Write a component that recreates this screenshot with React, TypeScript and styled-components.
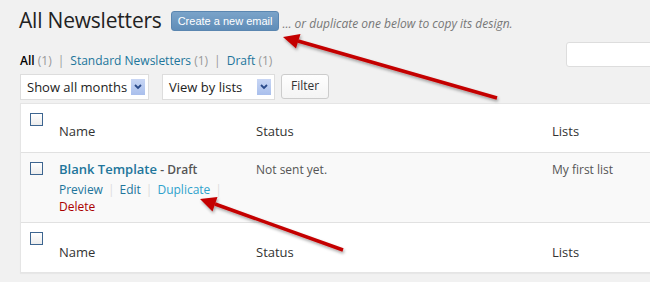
import React from 'react';
import styled, { createGlobalStyle } from 'styled-components';

const GlobalStyle = createGlobalStyle`
  html, body {
    margin: 0;
    padding: 0;
    background: #f1f1f1;
    overflow: hidden;
  }
  body {
    font-family: 'Open Sans', 'Liberation Sans', sans-serif;
    color: #333;
  }
`;

const StyledPage = styled.div`
  position: relative;
  width: 650px;
  height: 282px;
  padding-left: 20px;
  box-sizing: border-box;
`;

const StyledHeader = styled.div`
  align-items: center;
  display: flex;
  height: 28px;
  padding-top: 6px;
`;

const StyledTitle = styled.h1`
  color: #222;
  font-size: 21px;
  font-weight: 400;
  letter-spacing: -0.2px;
  line-height: 28px;
  margin: 0 9px 0 -1px;
`;

const StyledPrimaryButton = styled.span`
  background: linear-gradient(#7aa3c9, #5f8db8);
  border: 1px solid #5a86b0;
  border-radius: 3px;
  color: #fff;
  font-family: 'Liberation Sans', Arial, sans-serif;
  font-size: 11px;
  height: 18px;
  line-height: 18px;
  margin-top: 2px;
  padding: 0 6px;
`;

const StyledHint = styled.span`
  color: #777;
  font-size: 12px;
  font-style: italic;
  margin: 6px 0 0 3px;
`;

const StyledToolbar = styled.div`
  align-items: flex-start;
  display: flex;
  height: 40px;
  justify-content: space-between;
`;

const StyledSubsub = styled.ul`
  display: flex;
  font-size: 12px;
  gap: 6px;
  list-style: none;
  margin: 18px 0 0;
  padding: 0;
`;

const StyledFilterLink = styled.li<{ $current?: boolean }>`
  color: ${({ $current }) => ($current ? '#000' : '#21759b')};
  font-weight: ${({ $current }) => ($current ? 600 : 400)};
  white-space: pre;

  span {
    color: #999;
    font-weight: 400;
  }
`;

const StyledSep = styled.li`
  color: #999;
`;

const StyledSearch = styled.div`
  background: #fff;
  border: 1px solid #ddd;
  border-radius: 3px;
  height: 23px;
  margin-right: -18px;
  margin-top: 8px;
  width: 100px;
`;

const StyledFilters = styled.div`
  display: flex;
  gap: 13px;
  height: 29px;
`;

const StyledSelect = styled.div<{ $width: number }>`
  align-items: center;
  background: #fff;
  border: 1px solid #ddd;
  box-sizing: border-box;
  color: #222;
  display: flex;
  font-size: 13px;
  height: 26px;
  justify-content: space-between;
  padding: 0 3px 0 6px;
  width: ${({ $width }) => $width}px;
`;

const StyledSelectArrow = styled.span`
  align-items: center;
  background: linear-gradient(#c8d6f4, #a9bfec);
  display: flex;
  height: 16px;
  justify-content: center;
  width: 14px;
`;

const StyledButton = styled.span`
  background: linear-gradient(#fefefe, #f4f4f4);
  border: 1px solid #ccc;
  border-radius: 3px;
  box-sizing: border-box;
  color: #333;
  font-size: 12px;
  height: 25px;
  line-height: 22px;
  margin-left: -7px;
  padding: 0 9px;
`;

const StyledTable = styled.div`
  background: #fff;
  border: 1px solid #e5e5e5;
  box-shadow: 0 1px 1px rgba(0, 0, 0, 0.04);
  width: 660px;
`;

const StyledRow = styled.div<{ $alt?: boolean; $height: number }>`
  background: ${({ $alt }) => ($alt ? '#f9f9f9' : '#fff')};
  border-bottom: 1px solid #e1e1e1;
  box-sizing: border-box;
  display: grid;
  grid-template-columns: 28px 197px 296px 1fr;
  height: ${({ $height }) => $height}px;

  &:last-child {
    border-bottom: none;
  }
`;

const StyledCell = styled.div<{ $top: number }>`
  color: #555;
  font-size: 12px;
  padding: ${({ $top }) => $top}px 10px 0;
`;

const StyledHeadCell = styled(StyledCell)`
  color: #333;
  font-size: 13px;
`;

const StyledCheckbox = styled.span<{ $top: number }>`
  background: linear-gradient(#fff, #ececec);
  border: 1px solid #3d6590;
  box-sizing: border-box;
  display: block;
  height: 13px;
  margin: ${({ $top }) => $top}px 0 0 9px;
  width: 13px;
`;

const StyledRowTitle = styled.div`
  font-size: 13px;
  font-weight: 600;
  line-height: 18px;

  a {
    color: #21759b;
    text-decoration: none;
  }

  span {
    color: #555;
    font-size: 12px;
  }
`;

const StyledActions = styled.div`
  display: flex;
  font-size: 12px;
  line-height: 17px;
  margin-top: 2px;
`;

const StyledAction = styled.span<{ $tone: 'link' | 'hover' }>`
  color: ${({ $tone }) => ($tone === 'hover' ? '#2ea2cc' : '#21759b')};
`;

const StyledBar = styled.span`
  color: #ddd;
  margin: 0 5px;
`;

const StyledDelete = styled.div`
  color: #a00;
  font-size: 12px;
  line-height: 17px;
`;

const StyledOverlay = styled.svg`
  left: 0;
  pointer-events: none;
  position: absolute;
  top: 0;
`;

const Chevron = () => (
  <svg width="8" height="6" viewBox="0 0 8 6">
    <path d="M1 1 L4 4 L7 1" stroke="#2a4a8a" strokeWidth="1.8" fill="none" />
  </svg>
);

const HeadRow = ({ top }: { top: number }) => (
  <StyledRow $height={49}>
    <div>
      <StyledCheckbox $top={9} />
    </div>
    <StyledHeadCell $top={top}>Name</StyledHeadCell>
    <StyledHeadCell $top={top}>Status</StyledHeadCell>
    <StyledHeadCell $top={top}>Lists</StyledHeadCell>
  </StyledRow>
);

const Arrow = ({ tail, tip, base, left, right }: Record<string, [number, number]>) => (
  <g filter="url(#shadow)">
    <line x1={tail[0]} y1={tail[1]} x2={base[0]} y2={base[1]} stroke="#c40000" strokeWidth="3.5" />
    <polygon points={`${tip.join(',')} ${left.join(',')} ${right.join(',')}`} fill="#c40000" />
  </g>
);

export default function App() {
  return (
    <StyledPage>
      <GlobalStyle />
      <StyledHeader>
        <StyledTitle>All Newsletters</StyledTitle>
        <StyledPrimaryButton>Create a new email</StyledPrimaryButton>
        <StyledHint>... or duplicate one below to copy its design.</StyledHint>
      </StyledHeader>
      <StyledToolbar>
        <StyledSubsub>
          <StyledFilterLink $current>
            All <span>(1)</span>
          </StyledFilterLink>
          <StyledSep>|</StyledSep>
          <StyledFilterLink>
            Standard Newsletters <span>(1)</span>
          </StyledFilterLink>
          <StyledSep>|</StyledSep>
          <StyledFilterLink>
            Draft <span>(1)</span>
          </StyledFilterLink>
        </StyledSubsub>
        <StyledSearch />
      </StyledToolbar>
      <StyledFilters>
        <StyledSelect $width={129}>
          Show all months
          <StyledSelectArrow>
            <Chevron />
          </StyledSelectArrow>
        </StyledSelect>
        <StyledSelect $width={113}>
          View by lists
          <StyledSelectArrow>
            <Chevron />
          </StyledSelectArrow>
        </StyledSelect>
        <StyledButton>Filter</StyledButton>
      </StyledFilters>
      <StyledTable>
        <HeadRow top={18} />
        <StyledRow $alt $height={70}>
          <div>
            <StyledCheckbox $top={9} />
          </div>
          <StyledCell $top={7}>
            <StyledRowTitle>
              <a>Blank Template</a> <span>- Draft</span>
            </StyledRowTitle>
            <StyledActions>
              <StyledAction $tone="link">Preview</StyledAction>
              <StyledBar>|</StyledBar>
              <StyledAction $tone="link">Edit</StyledAction>
              <StyledBar>|</StyledBar>
              <StyledAction $tone="hover">Duplicate</StyledAction>
              <StyledBar>|</StyledBar>
            </StyledActions>
            <StyledDelete>Delete</StyledDelete>
          </StyledCell>
          <StyledCell $top={8}>Not sent yet.</StyledCell>
          <StyledCell $top={8}>My first list</StyledCell>
        </StyledRow>
        <HeadRow top={20} />
      </StyledTable>
      <StyledOverlay width="650" height="282">
        <defs>
          <filter id="shadow" x="-10%" y="-10%" width="130%" height="140%">
            <feDropShadow dx="1" dy="2" stdDeviation="1.5" floodColor="#000" floodOpacity="0.35" />
          </filter>
        </defs>
        <Arrow tail={[497, 98]} tip={[283, 37]} base={[298, 41]} left={[300.5, 34]} right={[296, 48.5]} />
        <Arrow tail={[343, 250]} tip={[200, 199]} base={[215, 204]} left={[217.5, 197]} right={[212.5, 211.5]} />
      </StyledOverlay>
    </StyledPage>
  );
}
